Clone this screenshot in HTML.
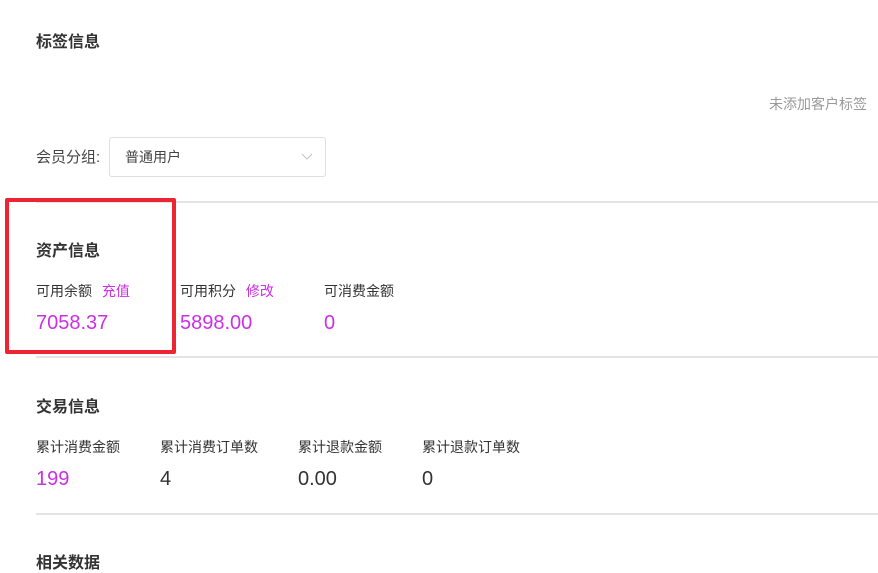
<!DOCTYPE html>
<html><head><meta charset="utf-8"><style>
body{margin:0;width:878px;height:570px;background:#fff;position:relative;overflow:hidden;font-family:"Liberation Sans","Noto Sans CJK SC",sans-serif;color:#333}
.a{position:absolute;white-space:nowrap}
.t{font-size:16px;font-weight:bold;color:#333}
.l{font-size:14px;color:#333}
.v{font-size:20px;color:#333}
.p{color:#cc2fe6}
.hr{position:absolute;left:36px;right:0;height:2px;background:#e4e4e4}
</style></head><body>
<div class="a t" style="left:36px;top:28px">标签信息</div>
<div class="a" style="right:11px;top:94px;font-size:14px;color:#999">未添加客户标签</div>
<div class="a" style="left:36px;top:146px;font-size:15px;color:#444">会员分组:</div>
<div class="a" style="left:109px;top:137px;width:215px;height:38px;border:1px solid #dcdfe6;border-radius:3px"></div>
<div class="a" style="left:125px;top:147px;font-size:14px;color:#444">普通用户</div>
<svg class="a" style="left:301px;top:152px" width="12" height="10"><path d="M1 2 L6 7 L11 2" fill="none" stroke="#c0c4cc" stroke-width="1"/></svg>
<div class="hr" style="top:201px"></div>
<div class="a t" style="left:36px;top:237px">资产信息</div>
<div class="a l" style="left:36px;top:281px">可用余额 <span class="p" style="margin-left:6px">充值</span></div>
<div class="a l" style="left:180px;top:281px">可用积分 <span class="p" style="margin-left:6px">修改</span></div>
<div class="a l" style="left:324px;top:281px">可消费金额</div>
<div class="a v p" style="left:36px;top:312px">7058.37</div>
<div class="a v p" style="left:180px;top:312px">5898.00</div>
<div class="a v p" style="left:324px;top:312px">0</div>
<div class="hr" style="top:356px"></div>
<div class="a t" style="left:36px;top:393px">交易信息</div>
<div class="a l" style="left:36px;top:437px">累计消费金额</div>
<div class="a l" style="left:160px;top:437px">累计消费订单数</div>
<div class="a l" style="left:298px;top:437px">累计退款金额</div>
<div class="a l" style="left:422px;top:437px">累计退款订单数</div>
<div class="a v p" style="left:36px;top:468px">199</div>
<div class="a v" style="left:160px;top:468px">4</div>
<div class="a v" style="left:298px;top:468px">0.00</div>
<div class="a v" style="left:422px;top:468px">0</div>
<div class="hr" style="top:513px"></div>
<div class="a t" style="left:36px;top:549px">相关数据</div>
<div class="a" style="left:5px;top:198px;width:163px;height:148px;border:4px solid #ee2530;border-radius:2px"></div>
</body></html>
